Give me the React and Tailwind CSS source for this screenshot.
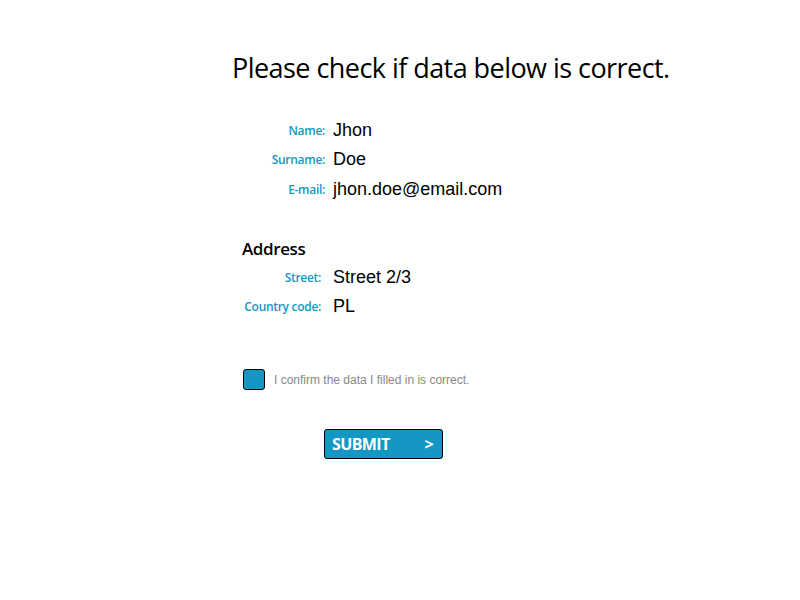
const Row = ({ label, value, className = "", labelClass = "" }) => (
  <div className={`flex items-center ${className}`}>
    <span className={`w-[92px] text-right text-[12px] font-semibold text-[#1597c2] tracking-[-0.3px] ${labelClass}`} style={{ fontFamily: '"Open Sans", sans-serif' }}>
      {label}
    </span>
    <span className="ml-[8px] text-[18px] text-black" style={{ fontFamily: '"Liberation Sans", Arial, sans-serif' }}>
      {value}
    </span>
  </div>
);

export default function App() {
  return (
    <div className="min-h-screen bg-white" style={{ fontFamily: '"Open Sans", sans-serif' }}>
      <div className="pl-[232px] pt-[48px]">
        <h1 className="text-[27px] leading-[40px] text-black tracking-[-0.55px]">Please check if data below is correct.</h1>

        <div className="pl-[1px] mt-[28px] flex flex-col">
          <Row label="Name:" value="Jhon" className="h-[29px]" />
          <Row label="Surname:" value="Doe" className="h-[29px]" />
          <Row label="E-mail:" value="jhon.doe@email.com" className="h-[31px]" />
        </div>

        <h2 className="mt-[30px] ml-[10px] text-[17px] font-semibold text-black leading-[28px] tracking-[-0.4px]">Address</h2>
        <div className="pl-[1px] flex flex-col">
          <Row label="Street:" value="Street 2/3" className="h-[29px]" labelClass="pr-[4px]" />
          <Row label="Country code:" value="PL" className="h-[29px]" labelClass="pr-[4px]" />
        </div>

        <div className="mt-[48px] ml-[11px] flex items-center">
          <div className="w-[22px] h-[21px] rounded-[3px] border border-black bg-[#1497c2]" />
          <span className="ml-[9px] text-[12px] text-[#888]" style={{ fontFamily: '"Liberation Sans", Arial, sans-serif' }}>
            I confirm the data I filled in is correct.
          </span>
        </div>

        <button className="mt-[39px] ml-[92px] w-[119px] h-[30px] rounded-[3px] border border-black bg-[#1497c2] flex items-center justify-between px-[7px] text-white font-bold text-[16px] tracking-[-0.6px]">
          <span>SUBMIT</span>
          <span className="mr-[2px]">&gt;</span>
        </button>
      </div>
    </div>
  );
}
